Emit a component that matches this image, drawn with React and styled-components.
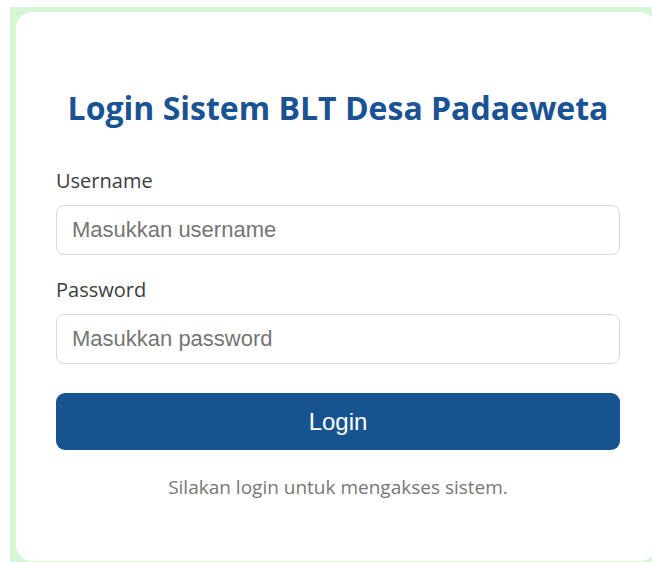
import React from "react";
import styled, { createGlobalStyle } from "styled-components";

const GlobalStyle = createGlobalStyle`
  html, body {
    margin: 0;
    padding: 0;
    background: #ffffff;
  }
  * { box-sizing: border-box; }
`;

const Backdrop = styled.div`
  margin: 7px 0 0 10px;
  height: 560px;
  padding: 5px 0 0 6px;
  background: #d6f5d6;
`;

const Card = styled.div`
  background: #ffffff;
  border-radius: 16px;
  width: 640px;
  height: 549px;
  padding: 77px 36px 0 40px;
`;

const Title = styled.h1`
  margin: 0 0 41px;
  text-align: center;
  font-family: "Open Sans", "Noto Sans", sans-serif;
  font-weight: 700;
  font-size: 32px;
  line-height: 38px;
  color: #1a5394;
`;

const Field = styled.div`
  display: flex;
  flex-direction: column;
  margin-bottom: ${(p) => p.$gap}px;
`;

const Label = styled.label`
  font-family: "Open Sans", "Noto Sans", sans-serif;
  font-size: 20px;
  line-height: 26px;
  color: #3d3d3d;
  margin-bottom: 11px;
`;

const Input = styled.input`
  height: 50px;
  width: 100%;
  border: 1px solid #d9d9d9;
  border-radius: 8px;
  padding: 0 15px;
  font-family: "Liberation Sans", Arial, sans-serif;
  font-size: 22px;
  color: #333;
  outline: none;
  &::placeholder { color: #757575; }
`;

const Button = styled.button`
  display: block;
  width: 100%;
  height: 57px;
  border: none;
  border-radius: 9px;
  background: #17548f;
  color: #ffffff;
  font-family: "Liberation Sans", Arial, sans-serif;
  font-size: 24px;
  cursor: pointer;
`;

const Note = styled.p`
  margin: 25px 0 0;
  text-align: center;
  font-family: "Open Sans", "Noto Sans", sans-serif;
  font-size: 19px;
  line-height: 24px;
  color: #777777;
`;

export default function App() {
  return (
    <>
      <GlobalStyle />
      <Backdrop>
        <Card>
          <Title>Login Sistem BLT Desa Padaeweta</Title>
          <Field $gap={22}>
            <Label htmlFor="username">Username</Label>
            <Input id="username" type="text" placeholder="Masukkan username" />
          </Field>
          <Field $gap={29}>
            <Label htmlFor="password">Password</Label>
            <Input id="password" type="password" placeholder="Masukkan password" />
          </Field>
          <Button type="button">Login</Button>
          <Note>Silakan login untuk mengakses sistem.</Note>
        </Card>
      </Backdrop>
    </>
  );
}
